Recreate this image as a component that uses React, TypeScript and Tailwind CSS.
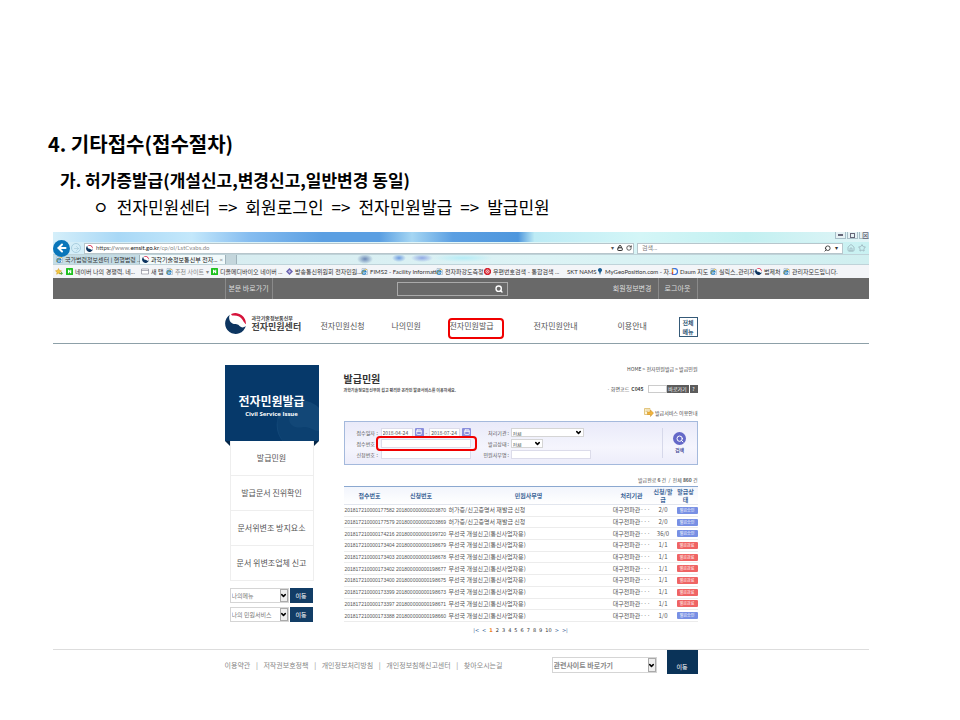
import React from "react";
import { Calendar, ChevronDown, Home, Lock, RotateCw, Search, Star, ArrowLeft, ArrowRight, Settings } from "lucide-react";

function GovMark({ className }: { className: string }) {
  return (
    <svg viewBox="0 0 20 20" className={`shrink-0 ${className}`} aria-hidden="true">
      <circle cx="10" cy="10" r="9.8" fill="#fff" />
      <path d="M6.500.7A10 10 0 0 1 19.900 10.800C18.800 9.600 18 8.600 16.800 6.600C14.800 3.400 11.500 2 6.900 2.400C5.800 2.200 5.600 1.100 6.500.7Z" fill="#d6133a" />
      <path d="M4.600 1.600A10 10 0 1 0 19.800 12.400C17.800 14.400 15 14 13.400 12C11.600 9.700 9 11.200 6.800 9.800C4 8 3.200 4.400 4.600 1.600Z" fill="#0d3560" />
    </svg>
  );
}

function IeIcon() {
  return (
    <svg viewBox="0 0 14 14" className="size-[7px] shrink-0" aria-hidden="true">
      <path d="M2 1h8l3 3v9H2z" fill="#f4f8fb" stroke="#8da0b4" />
      <path d="M9.500 10.500A4 4 0 1 1 10 7.800H3" fill="none" stroke="#1f7fc8" strokeWidth="2.400" />
      <path d="M1 12C2 7 7 3 12 3" fill="none" stroke="#e0a820" strokeWidth="1.500" />
    </svg>
  );
}

function NaverIcon() {
  return (
    <svg viewBox="0 0 14 14" className="size-[7px] shrink-0" aria-hidden="true">
      <rect width="14" height="14" rx="1" fill="#1fc01f" />
      <path d="M4 10.500V3.500h2l2.500 3.500V3.500h2v7h-2L6 7v3.500z" fill="#fff" />
    </svg>
  );
}

function FavStar() {
  return (
    <svg viewBox="0 0 16 14" className="h-[7px] w-2 shrink-0" aria-hidden="true">
      <path d="M7 1l2 4 4 .5-3 3 .7 4L7 10.500 3.300 12.500 4 8.500 1 5.500 5 5z" fill="#f5c842" stroke="#d09a20" />
      <path d="M9 10h3V7l4 4-4 3v-2H9z" fill="#5aa83c" />
    </svg>
  );
}

function PageIcon() {
  return (
    <svg viewBox="0 0 16 14" className="h-[7px] w-2 shrink-0" aria-hidden="true">
      <path d="M1 2h14v10H1zM1 5h14" fill="#fff" stroke="#667" />
    </svg>
  );
}

function DiamondIcon() {
  return (
    <svg viewBox="0 0 14 14" className="size-[7px] shrink-0" aria-hidden="true">
      <path d="M7 0l7 7-7 7-7-7z" fill="#6a62b0" />
      <path d="M7 4l3 3-3 3-3-3z" fill="#c4c0e8" />
    </svg>
  );
}

function RedIcon() {
  return (
    <svg viewBox="0 0 14 14" className="size-[7px] shrink-0" aria-hidden="true">
      <path d="M4 0h6l4 4v6l-4 4H4l-4-4V4z" fill="#d3232f" />
      <circle cx="7" cy="7" r="3.200" fill="none" stroke="#fff" strokeWidth="1.500" />
      <circle cx="7" cy="7" r="1" fill="#fff" />
    </svg>
  );
}

function PinIcon() {
  return (
    <svg viewBox="0 0 12 14" className="h-[7px] w-[6px] shrink-0" aria-hidden="true">
      <path d="M6 0a4 4 0 0 1 2 7.500L6 14 4 7.500A4 4 0 0 1 6 0z" fill="#1d5f92" />
    </svg>
  );
}

function DaumIcon() {
  return (
    <svg viewBox="0 0 14 14" className="size-[7px] shrink-0" aria-hidden="true">
      <path d="M3 1h4a6 6 0 0 1 0 12H3z" fill="#fff" stroke="#3a78e0" strokeWidth="2.500" />
      <path d="M3 1v7" stroke="#f0a020" strokeWidth="2.500" />
      <path d="M3 8v5" stroke="#e04a3a" strokeWidth="2.500" />
    </svg>
  );
}

const favorites: { icon: React.ReactNode; label: string; width: string; tone?: string }[] = [
  { icon: <NaverIcon />, label: "네이버 나의 경쟁력, 네...", width: "w-[75px]" },
  { icon: <PageIcon />, label: "새 탭", width: "w-[25px]" },
  { icon: <IeIcon />, label: "추천 사이트 ▾", width: "w-[45px]", tone: "text-[#888]" },
  { icon: <NaverIcon />, label: "디올메디바이오 네이버 ...", width: "w-[75px]" },
  { icon: <DiamondIcon />, label: "방송통신위원회 전자민원...", width: "w-[75px]" },
  { icon: <IeIcon />, label: "FIMS2 - Facility Informati...", width: "w-[75px]" },
  { icon: <IeIcon />, label: "전자파강도측정", width: "w-[48px]" },
  { icon: <RedIcon />, label: "우편번호검색 - 통합검색 ...", width: "w-[83px]" },
  { icon: null, label: "SKT NAMS", width: "w-[30px]" },
  { icon: <PinIcon />, label: "MyGeoPosition.com - 자...", width: "w-[74px]" },
  { icon: <DaumIcon />, label: "Daum 지도", width: "w-[39px]" },
  { icon: <IeIcon />, label: "실릭스_관리자", width: "w-[45px]" },
  { icon: <GovMark className="size-[7px]" />, label: "법제처", width: "w-[28px]" },
  { icon: <IeIcon />, label: "관리자모드입니다.", width: "w-[56px]" },
];

function BrowserChrome() {
  return (
    <div className="bg-[#dff3f6] font-['Lato','Noto_Sans_CJK_KR',sans-serif] text-[6px] leading-[8px] text-[#333]">
      <div className="flex h-[10px] justify-end gap-px bg-[linear-gradient(90deg,#d5effa_0%,#a9d8f6_8%,#c4e8fb_17%,#86bdf0_24%,#5b9fe2_33%,#5b9fe2_40%,#a5d6f3_44%,#5b9fe2_49%,#4f97dd_57%,#bdebf5_59%,#d4f6f7_72%,#c2f0f1_85%,#e2f5f7_100%)]">
        <span className="flex h-[7px] w-[11px] items-center justify-center border border-t-0 border-[#a8bec8] bg-[#e6f2f5]"><i className="block h-[2px] w-[5px] border border-[#667]" /></span>
        <span className="flex h-[7px] w-[11px] items-center justify-center border border-t-0 border-[#a8bec8] bg-[#e6f2f5]"><i className="block size-[5px] border border-[#667]" /></span>
        <span className="flex h-[7px] w-[10px] items-center justify-end border border-r-0 border-t-0 border-[#a8bec8] bg-[#e6f2f5] text-[7px] font-bold text-[#667]">⊠</span>
      </div>
      <div className="flex h-3 items-center gap-[3px] bg-[linear-gradient(90deg,#d3edf8,#e3f7f9_50%,#c9f1f2)]">
        <div className="flex w-7 shrink-0 items-center gap-px">
          <button aria-label="뒤로" className="relative z-10 -my-1 flex size-[17px] shrink-0 items-center justify-center rounded-full bg-[#0a76ba]">
            <ArrowLeft className="size-3 text-white" strokeWidth={4} />
          </button>
          <button aria-label="앞으로" className="flex size-[10px] items-center justify-center rounded-full border border-[#a9cfe0]">
            <ArrowRight className="size-[7px] text-[#9fc4d6]" />
          </button>
        </div>
        <div className="flex h-[11px] flex-1 items-center gap-[3px] border border-[#b7c6cc] bg-white px-px">
          <GovMark className="size-[7px]" />
          <span className="flex-1 text-[#8a8a8a]">
            <span className="text-[#444]">https://</span>www.<span className="text-[#111]">emsit.go.kr</span>/cp/ol/LstCvabs.do
          </span>
          <span className="text-[#555]">▾</span>
          <Lock className="size-[6px]" strokeWidth={4} />
          <RotateCw className="size-[6px]" strokeWidth={3} />
        </div>
        <div className="flex h-[11px] w-[206px] items-center border border-[#b7c6cc] bg-white px-1">
          <input aria-label="검색" placeholder="검색..." className="min-w-0 flex-1 outline-none placeholder:text-[#777]" />
          <Search className="size-[7px] -scale-x-100" strokeWidth={3} />
          <span className="pl-1">▾</span>
        </div>
        <div className="flex w-[23px] shrink-0 gap-[3px] overflow-hidden pl-px text-[#8fa3ad]">
          <Home className="size-2 shrink-0" />
          <Star className="size-2 shrink-0" />
          <Settings className="size-2 shrink-0" />
        </div>
      </div>
      <div className="flex h-[11px] border-y border-[#bfd3d9] bg-[radial-gradient(ellipse_8px_5px_at_312px_4px,#6b88b5,transparent),radial-gradient(ellipse_7px_4px_at_346px_3px,#6d9be0,transparent),radial-gradient(ellipse_11px_4px_at_369px_3px,#8fa8e4,transparent),radial-gradient(ellipse_30px_4px_at_410px_3px,#b5ecf6,transparent),linear-gradient(90deg,#d5e9ee,#dcf3f5_60%,#d0eff0)]">
        <div className="flex w-[87px] items-center gap-[2px] whitespace-nowrap border-r border-[#9fb3bb] bg-[#c4dce5] pl-[3px]">
          <IeIcon />국가법령정보센터 | 현행법령 ...
        </div>
        <div className="flex w-[86px] items-center gap-[2px] whitespace-nowrap border-r border-[#9fb3bb] bg-[#f1fafb] pl-[2px] text-[#111]">
          <GovMark className="size-[7px]" />
          <span className="flex-1">과학기술정보통신부 전자...</span>
          <span className="pr-1 text-[#777]">×</span>
        </div>
        <div className="w-[11px] border-r border-[#9fb3bb] bg-[#c4d6dc]" />
      </div>
      <nav aria-label="즐겨찾기" className="flex h-[13px] items-center overflow-hidden bg-[#f3f5f8] pl-[2px]">
        <div className="w-[11px] shrink-0"><FavStar /></div>
        {favorites.map((f) => (
          <a key={f.label} href="#" className={`flex shrink-0 items-center gap-[2px] whitespace-nowrap ${f.width} ${f.tone ?? ""}`}>
            {f.icon}{f.label}
          </a>
        ))}
      </nav>
    </div>
  );
}

function Select({ label, value, className, arrow = "plain" }: { label: string; value: string; className: string; arrow?: "plain" | "boxed" }) {
  return (
    <div className={`relative border border-[#d5d5d5] bg-white ${className}`}>
      <select aria-label={label} className="block size-full appearance-none bg-transparent pl-px outline-none">
        <option>{value}</option>
      </select>
      <span className={`pointer-events-none absolute inset-y-0 right-0 flex items-center justify-center text-black ${arrow === "boxed" ? "w-2 border border-[#aaa] bg-[#eee]" : "w-2"}`}>
        <ChevronDown className="size-[7px] shrink-0" strokeWidth={5} />
      </span>
    </div>
  );
}

const navItems = ["전자민원신청", "나의민원", "전자민원발급", "전자민원안내", "이용안내"];
const navWidths = ["w-[71px]", "w-[58px]", "w-[84px]", "w-[84px]", "w-[61px]"];

function SiteHeader() {
  return (
    <header>
      <div className="h-[21px] bg-[#696969] text-[7px] text-[#ddd]">
        <div className="mx-auto flex h-full w-[473px] items-stretch">
          <a href="#" className="flex w-12 items-center justify-center whitespace-nowrap border-x border-[#8a8a8a]">본문 바로가기</a>
          <form className="ml-[124px] mr-auto flex items-center">
            <div className="flex h-[14px] w-[111px] items-center border border-[#aaa] pr-1">
              <input aria-label="통합검색" className="min-w-0 flex-1 outline-none" />
              <Search className="size-[8px] text-white" strokeWidth={4} />
            </div>
          </form>
          <a href="#" className="flex items-center border-r border-[#8a8a8a] pr-[6px]">회원정보변경</a>
          <a href="#" className="flex w-[39px] items-center justify-center border-r border-[#8a8a8a]">로그아웃</a>
        </div>
      </div>
      <div className="h-[45px] border-b border-[#8da0a8]">
        <div className="mx-auto flex w-[473px] pt-[10px]">
          <a href="#" className="flex w-[96px] items-center gap-[6px]">
            <GovMark className="size-[21px]" />
            <span className="whitespace-nowrap text-[9px] font-bold leading-[10px] text-[#444]">
              <span className="block text-[5px] leading-[8px]">과학기술정보통신부</span>
              전자민원센터
            </span>
          </a>
          <nav className="flex pt-[11px] text-[8px] leading-[12px] text-[#555]">
            {navItems.map((item, i) => (
              <a key={item} href="#" className={`relative whitespace-nowrap ${navWidths[i]}`}>
                {item}
                {i === 2 && <span className="absolute -left-[2px] -top-[2px] h-[21px] w-14 rounded-[4px] border-2 border-[#f00000]" />}
              </a>
            ))}
          </nav>
          <button className="mt-2 h-5 w-[19px] border border-[#355a78] text-center text-[6px] font-bold leading-[9px] text-[#355a78]">전체<br />메뉴</button>
        </div>
      </div>
    </header>
  );
}

function Sidebar() {
  return (
    <aside className="w-[94px] shrink-0">
      <div className="relative h-[76px] overflow-hidden bg-[#06396a] pt-7 text-center font-bold text-white">
        <svg viewBox="0 0 50 50" className="absolute -bottom-3 -right-2 size-14" aria-hidden="true">
          <circle cx="27" cy="25" r="22" fill="#124777" />
          <path d="M21 11C11 20 18 29 28 27C36 25 39 34 49 29L48 42L29 48C12 46 5 36 6 20Z" fill="#06396a" opacity="0.500" />
        </svg>
        <h2 className="relative text-[12px] leading-4">전자민원발급</h2>
        <p className="relative font-['Open_Sans',sans-serif] text-[6px] leading-[11px]">Civil Service Issue</p>
      </div>
      <div className="flex h-[5px] justify-between">
        <svg viewBox="0 0 5 5" className="size-[5px]" aria-hidden="true"><path d="M0 0h5v5z" fill="#052647" /></svg>
        <svg viewBox="0 0 5 5" className="size-[5px]" aria-hidden="true"><path d="M0 0h5L0 5z" fill="#052647" /></svg>
      </div>
      <nav className="mx-[5px] -mt-[5px] border-x border-[#eee] text-[8px] text-[#555]">
        {["발급민원", "발급문서 진위확인", "문서위변조 방지요소", "문서 위변조업체 신고"].map((t) => (
          <a key={t} href="#" className="flex h-[35px] items-center justify-center whitespace-nowrap border-b border-[#eee]">{t}</a>
        ))}
      </nav>
      <div className="mx-[5px] mt-[7px] flex flex-col gap-1 text-[6px] text-[#777]">
        {["나의메뉴", "나의 민원서비스"].map((t) => (
          <form key={t} className="flex gap-px">
            <Select label={t} value={t} className="h-[15px] w-[59px]" arrow="boxed" />
            <button type="button" className="h-[15px] w-[23px] bg-[#123d66] text-[6px] text-white">이동</button>
          </form>
        ))}
      </div>
    </aside>
  );
}

function CalButton({ label }: { label: string }) {
  return (
    <button type="button" aria-label={label} className="flex size-[9px] shrink-0 items-center justify-center rounded-[1px] bg-[#8a8fdc]">
      <Calendar className="size-[6px] text-white" strokeWidth={3} />
    </button>
  );
}

function SearchPanel() {
  const field = "h-[9px] border border-[#dcdcea] bg-white outline-none";
  return (
    <form className="mt-[3px] flex h-11 border border-[#a4b9dc] bg-[linear-gradient(#e9eaf9,#f5f5fd_60%,#ededfa)] text-[5px] leading-[9px] text-[#555]">
      <div className="grid w-[128px] grid-cols-[20px_4px_1fr] content-center items-center gap-y-[2px] pl-3">
        <label htmlFor="from">접수일자</label><span>:</span>
        <div className="flex items-center gap-[2px]">
          <input id="from" defaultValue="2018-04-24" className={`w-8 pl-px ${field}`} />
          <CalButton label="시작일" />-
          <input aria-label="종료일" defaultValue="2018-07-24" className={`w-[31px] pl-px ${field}`} />
          <CalButton label="종료일 선택" />
        </div>
        <label htmlFor="recv">접수번호</label><span>:</span>
        <div className="relative flex">
          <input id="recv" className={`w-[90px] ${field}`} />
          <span className="pointer-events-none absolute -left-[5px] -top-[3px] h-[15px] w-[101px] rounded-[4px] border-2 border-[#f00000]" />
        </div>
        <label htmlFor="appl">신청번호</label><span>:</span>
        <input id="appl" className={`w-[90px] ${field}`} />
      </div>
      <div className="grid grid-cols-[26px_4px_80px] content-center items-center gap-y-[2px] pl-2">
        <span className="text-right">처리기관</span><span className="pl-px">:</span>
        <Select label="처리기관" value="전체" className="h-[9px] w-[73px]" />
        <span className="text-right">발급상태</span><span className="pl-px">:</span>
        <Select label="발급상태" value="전체" className="h-[9px] w-8" />
        <label htmlFor="task" className="text-right">민원사무명</label><span className="pl-px">:</span>
        <input id="task" className={`w-20 ${field}`} />
      </div>
      <div className="my-[6px] ml-auto flex w-[35px] items-center justify-center border-l border-[#d6d8ea]">
        <button type="button" className="flex flex-col items-center font-bold text-[#4a4f9a]">
          <span className="flex size-[13px] items-center justify-center rounded-full bg-[#6468c8]">
            <Search className="size-2 text-white" strokeWidth={3} />
          </span>
          검색
        </button>
      </div>
    </form>
  );
}

const rows: [string, string, string, string, boolean][] = [
  ["201817210000177582", "201800000000203870", "허가증/신고증명서 재발급 신청", "2/0", false],
  ["201817210000177579", "201800000000203869", "허가증/신고증명서 재발급 신청", "2/0", false],
  ["201817210000174216", "201800000000199720", "무선국 개설신고(통신사업자용)", "36/0", false],
  ["201817210000173404", "201800000000198679", "무선국 개설신고(통신사업자용)", "1/1", true],
  ["201817210000173403", "201800000000198678", "무선국 개설신고(통신사업자용)", "1/1", true],
  ["201817210000173402", "201800000000198677", "무선국 개설신고(통신사업자용)", "1/1", true],
  ["201817210000173400", "201800000000198675", "무선국 개설신고(통신사업자용)", "1/1", true],
  ["201817210000173399", "201800000000198673", "무선국 개설신고(통신사업자용)", "1/1", true],
  ["201817210000173397", "201800000000198671", "무선국 개설신고(통신사업자용)", "1/1", true],
  ["201817210000173388", "201800000000198660", "무선국 개설신고(통신사업자용)", "1/0", false],
];

function ResultTable() {
  const num = "p-0 text-center text-[5px] font-['Liberation_Sans',sans-serif]";
  return (
    <table className="h-[136px] w-full table-fixed border-collapse whitespace-nowrap border-t border-[#8ba8d0] text-[6px] leading-[8px] text-[#555]">
      <colgroup>
        <col className="w-[52px]" /><col className="w-[51px]" /><col /><col className="w-[42px]" /><col className="w-[21px]" /><col className="w-6" />
      </colgroup>
      <thead>
        <tr className="h-[18px] border-b border-[#e2e6ee] bg-[linear-gradient(#f2f5fc,#ffffff)] text-[#3c6598]">
          <th className="p-0">접수번호</th><th className="p-0">신청번호</th><th className="p-0">민원사무명</th><th className="p-0">처리기관</th>
          <th className="p-0">신청/발<br />급</th><th className="p-0">발급상<br />태</th>
        </tr>
      </thead>
      <tbody>
        {rows.map(([a, b, task, count, done]) => (
          <tr key={a} className="border-b border-[#ececec]">
            <td className={num}>{a}</td>
            <td className={num}>{b}</td>
            <td className="p-0 pl-[2px]">{task}</td>
            <td className="p-0 text-center">대구전파관···</td>
            <td className="p-0 text-center">{count}</td>
            <td className="p-0 pl-[3px]">
              <span className={`block h-[7px] w-[21px] rounded-[1px] text-center text-[4px] leading-[7px] text-white ${done ? "bg-[#ef6464]" : "bg-[#7890e4]"}`}>
                {done ? "발급완료" : "발급승인"}
              </span>
            </td>
          </tr>
        ))}
      </tbody>
    </table>
  );
}

function MainContent() {
  return (
    <main className="ml-[25px] min-w-0 flex-1">
      <div className="flex justify-between">
        <div className="whitespace-nowrap pt-[7px]">
          <h1 className="text-[10px] font-bold leading-[14px] text-[#333]">발급민원</h1>
          <p className="text-[4px] font-bold leading-[8px] text-[#555]">과학기술정보통신부의 쉽고 편리한 온라인 발급서비스를 이용하세요.</p>
        </div>
        <div className="flex flex-col items-end whitespace-nowrap text-[5px] leading-[8px] text-[#444]">
          <p>HOME &gt; 전자민원발급 &gt; 발급민원</p>
          <form className="mt-3 flex h-2 items-center">
            <label htmlFor="code">· 화면코드 <b className="pl-px">C045</b></label>
            <input id="code" className="ml-1 h-2 w-[19px] border border-[#ccc] outline-none" />
            <button type="button" className="h-2 w-[22px] bg-[#5c5c5c] text-white">바로가기</button>
            <button type="button" className="ml-px h-2 w-2 bg-[#5c5c5c] text-white">?</button>
          </form>
          <a href="#" className="mt-[14px] flex h-[11px] items-center gap-px">
            <svg viewBox="0 0 20 18" className="h-[9px] w-[10px]" aria-hidden="true">
              <path d="M1 1h11v12H1z" fill="#fdf5d8" stroke="#d9b45c" strokeWidth="1.500" />
              <path d="M3 4h7M3 7h5" stroke="#c9a75c" />
              <path d="M7 8h6V4l6 6-6 7v-4H7z" fill="#f3b53a" stroke="#c98a1e" />
            </svg>
            발급서비스 이용안내
          </a>
        </div>
      </div>
      <SearchPanel />
      <p className="mt-[11px] text-right text-[5px] leading-[8px] text-[#555]">발급완료 <b>6</b> 건 &nbsp;/ &nbsp;전체 <b>860</b> 건</p>
      <div className="mt-[2px]"><ResultTable /></div>
      <nav aria-label="페이지" className="mt-[3px] flex justify-center gap-[3px] font-['DejaVu_Sans',sans-serif] text-[5px] leading-[10px] text-[#333]">
        <a href="#" className="text-[#3c6598]">|&lt;</a>
        <a href="#" className="text-[#3c6598]">&lt;</a>
        <b className="text-[#f08020]">1</b>
        {[2, 3, 4, 5, 6, 7, 8, 9, 10].map((n) => <a key={n} href="#">{n}</a>)}
        <a href="#" className="text-[#3c6598]">&gt;</a>
        <a href="#" className="text-[#3c6598]">&gt;|</a>
      </nav>
    </main>
  );
}

function SiteFooter() {
  const links = ["이용약관", "저작권보호정책", "개인정보처리방침", "개인정보침해신고센터", "찾아오시는길"];
  return (
    <footer className="border-t border-[#ddd]">
      <div className="mx-auto flex w-[473px] items-center text-[7px] text-[#888]">
        <nav className="flex w-[278px] justify-between whitespace-nowrap pt-[7px]">
          {links.map((l, i) => (
            <React.Fragment key={l}>
              {i > 0 && <span>|</span>}
              <a href="#">{l}</a>
            </React.Fragment>
          ))}
        </nav>
        <Select label="관련사이트" value="관련사이트 바로가기" className="ml-auto mt-[6px] h-4 w-[105px] font-bold" arrow="boxed" />
        <button className="ml-[10px] h-6 w-[31px] bg-[#0a3358] pt-2 text-[6px] text-white">이동</button>
      </div>
    </footer>
  );
}

export default function App() {
  return (
    <div className="bg-white pb-11 pt-[130px] font-['Noto_Sans_CJK_KR',sans-serif] text-black">
      <div className="pl-12">
        <h1 className="text-[20px] font-bold leading-7">4. 기타접수(접수절차)</h1>
        <h2 className="pl-3 pt-[10px] text-[17px] font-bold leading-6">가. 허가증발급(개설신고,변경신고,일반변경 동일)</h2>
        <p className="flex gap-2 whitespace-nowrap pl-[45px] pt-[3px] text-[17px] leading-6">
          <span>ㅇ</span><span>전자민원센터</span><span>=&gt;</span><span>회원로그인</span><span>=&gt;</span><span>전자민원발급</span><span>=&gt;</span><span>발급민원</span>
        </p>
      </div>
      <section className="ml-[53px] mr-[91px] mt-[13px]">
        <BrowserChrome />
        <SiteHeader />
        <div className="mx-auto flex w-[473px] pb-[14px] pt-[21px]">
          <Sidebar />
          <MainContent />
        </div>
        <SiteFooter />
      </section>
    </div>
  );
}
